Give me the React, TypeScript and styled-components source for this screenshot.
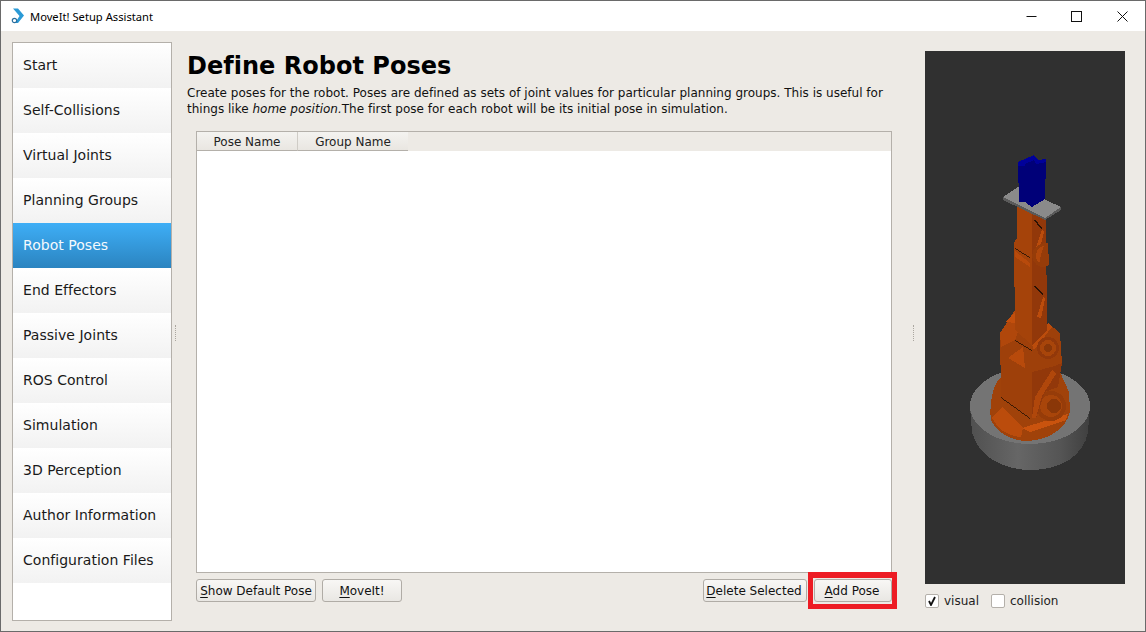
import React from "react";
import styled, { createGlobalStyle } from "styled-components";

const Global = createGlobalStyle`
  html, body { margin: 0; padding: 0; background: #edeae5; }
  * { box-sizing: border-box; }
`;

const Win = styled.div`
  width: 1146px; height: 632px; display: flex; flex-direction: column;
  border: 1px solid #6a6a6a; background: #edeae5; overflow: hidden;
  font-family: "DejaVu Sans", sans-serif; color: #111;
`;
const TitleBar = styled.div`
  height: 30px; flex: none; background: #fff; display: flex; align-items: center; padding-left: 10px;
`;
const TitleText = styled.span`
  font-family: "Noto Sans", sans-serif; font-size: 11.2px; color: #000; margin-left: 5px;
`;
const WinButtons = styled.div`
  margin-left: auto; display: flex; height: 100%;
`;
const WinButton = styled.div`
  width: 45.5px; height: 100%; display: flex; align-items: center; justify-content: center;
`;
const Body = styled.div`
  flex: 1; display: flex; min-height: 0; padding: 11px 0 10px 11px;
`;
const Sidebar = styled.nav`
  width: 160px; flex: none; background: #fff; border: 1px solid #b4b0aa; display: flex; flex-direction: column;
`;
const NavItem = styled.div<{ $active?: boolean }>`
  height: 45px; flex: none; display: flex; align-items: center; padding: 0 0 2px 10px;
  font-size: 14px; letter-spacing: 0.03px;
  color: ${p => (p.$active ? "#f4f9fd" : "#1a1a1a")};
  background: ${p => p.$active
    ? "linear-gradient(180deg,#3eaef6 0%,#2b84c0 100%)"
    : "linear-gradient(180deg,#ffffff 0%,#f2f2f2 100%)"};
`;
const Grip = styled.div<{ $w: number; $left: number }>`
  width: ${p => p.$w}px; flex: none; display: flex; align-items: center; padding-left: ${p => p.$left}px;
`;
const GripDots = styled.div`
  width: 1px; height: 16px; border-left: 1px dotted #aaa69f; margin-top: 2px;
`;
const Main = styled.main`
  width: 705px; flex: none; display: flex; flex-direction: column; padding-top: 8px;
`;
const Heading = styled.h1`
  margin: 0; font-size: 24px; line-height: 32px; font-weight: 700; color: #000; letter-spacing: 0.02px;
`;
const Desc = styled.p`
  margin: 4px 0 0; font-size: 12px; line-height: 15.5px; color: #111; height: 32px; white-space: nowrap; letter-spacing: 0.01px;
`;
const TableBox = styled.div`
  margin: 13px 0 0 9px; width: 696px; height: 442px; flex: none; background: #fff;
  border: 1px solid #b4b0aa; display: flex; flex-direction: column;
`;
const HeaderRow = styled.div`
  height: 19px; flex: none; display: flex; background: #edeae5;
`;
const HeaderCell = styled.div<{ $w: number }>`
  width: ${p => p.$w}px; display: flex; align-items: center; justify-content: center; padding-top: 1px;
  font-size: 12px; color: #222; background: linear-gradient(180deg,#f4f3f0,#e9e6e1);
  border-bottom: 1px solid #b4b0aa; border-right: 1px solid #cfccc6;
  &:last-child { border-right: 0; }
`;
const Actions = styled.div`
  margin: 6px 0 0 9px; width: 696px; display: flex; gap: 6px;
`;
const Spacer = styled.div`flex: 1;`;
const Btn = styled.button<{ $w: number; $gapRight?: number; $padRight?: number }>`
  position: relative;
  width: ${p => p.$w}px; height: 23px; padding: 0 ${p => p.$padRight ?? 0}px 0 0; border: 1px solid #b0aca6; border-radius: 3px;
  margin-right: ${p => p.$gapRight ?? 0}px;
  background: linear-gradient(180deg,#f8f7f5,#e9e7e3);
  font: 12px "DejaVu Sans", sans-serif; color: #111;
  u { text-underline-offset: 2px; }
`;
const HighlightBtn = styled(Btn)`
  &::after {
    content: ""; position: absolute; top: -8px; left: -7px; right: -6px; bottom: -8px;
    border: 5px solid #ed1c24; border-top-width: 6px;
  }
`;
const Side = styled.aside`
  width: 200px; flex: none; display: flex; flex-direction: column; padding-top: 9px;
`;
const Viewer = styled.div`
  width: 200px; height: 533px; flex: none; background: #303030;
`;
const Checks = styled.div`
  margin-top: 10px; display: flex; align-items: center; font-size: 12px; color: #222;
`;
const Check = styled.span<{ $gap: number }>`
  width: 14px; height: 14px; background: #fff; border: 1px solid #b4b0aa; border-radius: 2px;
  margin-left: ${p => p.$gap}px; margin-right: 5px; display: flex; align-items: center; justify-content: center;
`;
const Robot = styled.svg`display: block;`;

const items = ["Start","Self-Collisions","Virtual Joints","Planning Groups","Robot Poses","End Effectors","Passive Joints","ROS Control","Simulation","3D Perception","Author Information","Configuration Files"];

const RobotArt = () => (
  <Robot width={200} height={533} viewBox="925 51 200 533" shapeRendering="crispEdges">
    <defs>
      <linearGradient id="disc" x1="0" x2="1" y1="0" y2="0">
        <stop offset="0" stopColor="#505050" /><stop offset="0.4" stopColor="#666" /><stop offset="0.75" stopColor="#555" /><stop offset="1" stopColor="#3f3f3f" />
      </linearGradient>
    </defs>
    {/* base disc */}
    <path d="M970 406 L972 432 C978 456 1002 470 1031 470 C1060 470 1084 456 1088 432 L1090 406 Z" fill="url(#disc)" />
    <ellipse cx="1030" cy="406" rx="60" ry="38" fill="#747474" />
    {/* orange foot */}
    <path d="M991 420 C989 405 992 390 998 380 L1004 376 L1060 372 L1069 392 L1070 412 C1066 428 1050 440 1028 441 C1010 441 996 432 991 420 Z" fill="#a0420a" />
    <path d="M992 418 L1002 407 L1023 428 L1021 437 C1008 436 998 430 992 418 Z" fill="#bb4c0c" />
    <path d="M1022 428 L1068 414 L1066 420 L1030 432 Z" fill="#c9530e" />
    <circle cx="1051" cy="406" r="15" fill="#963c09" />
    <circle cx="1051" cy="406" r="11" fill="#a8450a" />
    <circle cx="1054" cy="406" r="7" fill="#8a3708" />
    {/* lower link */}
    <path d="M1015 310 L1000 333 L1001 397 L1030 418 L1032 418 L1032 330 Z" fill="#9e400a" />
    <path d="M1015 310 L1000 333 L1001 347 L1015 340 L1022 320 Z" fill="#b0470b" />
    <path d="M1008 358 L1023 347 L1025 368 Z" fill="#b84a0b" />
    <path d="M1015 340 L1032 350 L1032 351 L1015 341 Z" fill="#3a1a05" />
    <path d="M1001 397 L1030 418 L1030 419 L1001 398 Z" fill="#3a1a05" />
    <path d="M1032 350 L1032 418 L1036 418 L1045 392 L1058 387 L1062 363 L1056 345 Z" fill="#92380a" />
    <path d="M1032 418 L1035 397 L1052 370 L1056 374 L1042 396 L1036 418 Z" fill="#b0470b" />
    <path d="M1032 340 L1048 323 L1060 333 L1062 363 L1055 366 L1032 372 Z" fill="#9e400a" />
    <path d="M1031 342 L1048 323 L1052 327 L1034 350 Z" fill="#bb4c0c" />
    <circle cx="1048" cy="348" r="11" fill="#92380a" />
    <circle cx="1048" cy="348" r="8" fill="#a8450a" />
    <circle cx="1048" cy="348" r="4" fill="#8a3708" />
    {/* upper link */}
    <path d="M1017 205 L1046 218 L1047 330 L1032 345 L1015 330 L1014 243 L1017 238 Z" fill="#a5430a" />
    <path d="M1032 214 L1046 218 L1047 330 L1032 345 Z" fill="#92380a" />
    <path d="M1015 251 L1030 263 L1030 267 L1015 257 Z" fill="#b84a0b" />
    <path d="M1015 248 L1030 257 L1030 258 L1015 249 Z" fill="#3a1a05" />
    <path d="M1042 230 L1035 250 L1039 252 L1044 232 Z" fill="#bb4c0c" />
    <path d="M1035 219 L1042 228 L1041 229 L1034 220 Z" fill="#2a1204" />
    <path d="M1035 285 L1043 294 L1042 295 L1034 286 Z" fill="#2a1204" />
    <path d="M1043 297 L1037 317 L1041 318 L1045 299 Z" fill="#bb4c0c" />
    <path d="M1032 256 C1032 248 1040 242 1048 243 L1049 265 C1042 270 1034 266 1032 256 Z" fill="#963c09" />
    <path d="M1036 256 C1036 250 1040 246 1044 246 C1042 250 1040 256 1040 262 C1037 262 1036 260 1036 256 Z" fill="#b0470b" />
    <path d="M1007 320 L1015 312 L1015 323 L1006 322 Z" fill="#c24f0d" />
    {/* plate */}
    <path d="M1003 197 L1018 187 L1061 207 L1061 210 L1045 220 L1003 200 Z" fill="#5a5a5a" />
    <path d="M1003 197 L1018 187 L1061 207 L1045 218 Z" fill="#8a8a8a" />
    {/* gripper */}
    <path d="M1018 162 L1034 155 L1038 160 L1046 159 L1045 199 L1032 207 L1025 202 L1019 202 Z" fill="#000078" />
    <path d="M1018 162 L1034 155 L1038 160 L1046 159 L1046 162 L1036 164 L1034 160 L1025 164 L1025 166 L1018 166 Z" fill="#00009a" />
  </Robot>
);

export default function App() {
  return (
    <Win>
      <Global />
      <TitleBar>
        <svg width="14" height="16" viewBox="0 0 14 16">
          <path d="M2 0.5 L7 0.5 L13 7.5 L7 15 L4 15 L8.5 8 Z" fill="#2b9ad6" />
          <circle cx="3.5" cy="12.5" r="2.2" fill="none" stroke="#2b6f9e" strokeWidth="1.2" />
        </svg>
        <TitleText>MoveIt! Setup Assistant</TitleText>
        <WinButtons>
          <WinButton>
            <svg width="11" height="11" viewBox="0 0 11 11"><path d="M0.5 5.5H10.5" stroke="#111" fill="none" /></svg>
          </WinButton>
          <WinButton>
            <svg width="11" height="11" viewBox="0 0 11 11"><rect x="0.5" y="0.5" width="10" height="10" stroke="#111" fill="none" /></svg>
          </WinButton>
          <WinButton>
            <svg width="11" height="11" viewBox="0 0 11 11"><path d="M0.5 0.5L10.5 10.5M10.5 0.5L0.5 10.5" stroke="#111" fill="none" /></svg>
          </WinButton>
        </WinButtons>
      </TitleBar>
      <Body>
        <Sidebar>
          {items.map(t => <NavItem key={t} $active={t === "Robot Poses"}>{t}</NavItem>)}
        </Sidebar>
        <Grip $w={15} $left={3}><GripDots /></Grip>
        <Main>
          <Heading>Define Robot Poses</Heading>
          <Desc>
            Create poses for the robot. Poses are defined as sets of joint values for particular planning groups. This is useful for<br />
            things like <i>home position.</i>The first pose for each robot will be its initial pose in simulation.
          </Desc>
          <TableBox>
            <HeaderRow>
              <HeaderCell $w={101}>Pose Name</HeaderCell>
              <HeaderCell $w={110}>Group Name</HeaderCell>
            </HeaderRow>
          </TableBox>
          <Actions>
            <Btn $w={120}><u>S</u>how Default Pose</Btn>
            <Btn $w={80}><u>M</u>oveIt!</Btn>
            <Spacer />
            <Btn $w={104} $gapRight={1} $padRight={2}><u>D</u>elete Selected</Btn>
            <HighlightBtn $w={78} $padRight={2}><u>A</u>dd Pose</HighlightBtn>
          </Actions>
        </Main>
        <Grip $w={33} $left={21}><GripDots /></Grip>
        <Side>
          <Viewer><RobotArt /></Viewer>
          <Checks>
            <Check $gap={0}>
              <svg width="10" height="10" viewBox="0 0 10 10"><path d="M2 5 L4 9 L8 1" stroke="#111" strokeWidth="1.8" fill="none" /></svg>
            </Check>
            visual
            <Check $gap={12} />
            collision
          </Checks>
        </Side>
      </Body>
    </Win>
  );
}
